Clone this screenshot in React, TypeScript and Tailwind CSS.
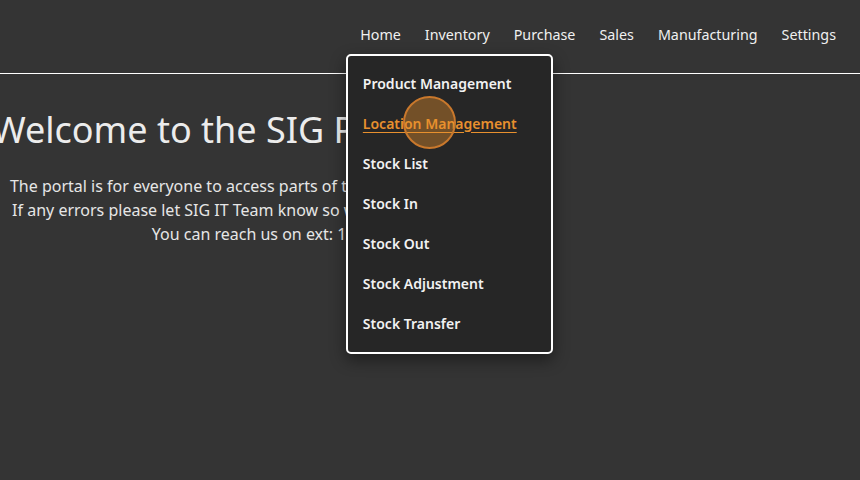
import React from "react";

const navItems = ["Home", "Inventory", "Purchase", "Sales", "Manufacturing", "Settings"];
const menuItems = [
  "Product Management",
  "Location Management",
  "Stock List",
  "Stock In",
  "Stock Out",
  "Stock Adjustment",
  "Stock Transfer",
];

export default function App() {
  return (
    <div
      className="w-[860px] h-[480px] overflow-hidden bg-[#343434] text-[#ececec] relative"
      style={{ fontFamily: '"Noto Sans", "Open Sans", sans-serif' }}
    >
      <header className="h-[74px] border-b border-white flex items-center justify-end pr-3 pb-[4px]">
        <nav className="flex items-center">
          {navItems.map((item) => (
            <div key={item} className="relative px-3 text-[14.3px] leading-5 text-[#f0f0f0]">
              <span>{item}</span>
              {item === "Inventory" && (
                <div className="absolute left-[-67px] top-[29px] z-10 w-[207px] rounded-[5px] border-2 border-white bg-[#262626] py-[8px] shadow-[0_6px_16px_rgba(0,0,0,0.45)]">
                  {menuItems.map((m) => (
                    <div key={m} className="h-10 flex items-center pl-[15px] text-[14px] font-semibold whitespace-nowrap">
                      {m === "Location Management" ? (
                        <span className="text-[#e8902e] underline underline-offset-[3px]">{m}</span>
                      ) : (
                        <span className="text-[#f2f2f2]">{m}</span>
                      )}
                    </div>
                  ))}
                </div>
              )}
            </div>
          ))}
        </nav>
      </header>
      <main className="w-[530px] flex flex-col items-center pt-[36px]">
        <h1 className="text-[36px] leading-10 whitespace-nowrap text-[#ececec]">Welcome to the SIG Portal Page!</h1>
        <div className="mt-6 flex flex-col items-center text-[16px] leading-6 whitespace-nowrap text-[#e6e6e6]">
          <p>The portal is for everyone to access parts of the company's systems.</p>
          <p>If any errors please let SIG IT Team know so we can fix them swiftly.</p>
          <p>You can reach us on ext: 1234.</p>
        </div>
      </main>
      <div className="absolute left-[403px] top-[96px] z-20 h-[53px] w-[53px] rounded-full border-2 border-[#c9782c] bg-[#e8902e]/40" />
    </div>
  );
}
